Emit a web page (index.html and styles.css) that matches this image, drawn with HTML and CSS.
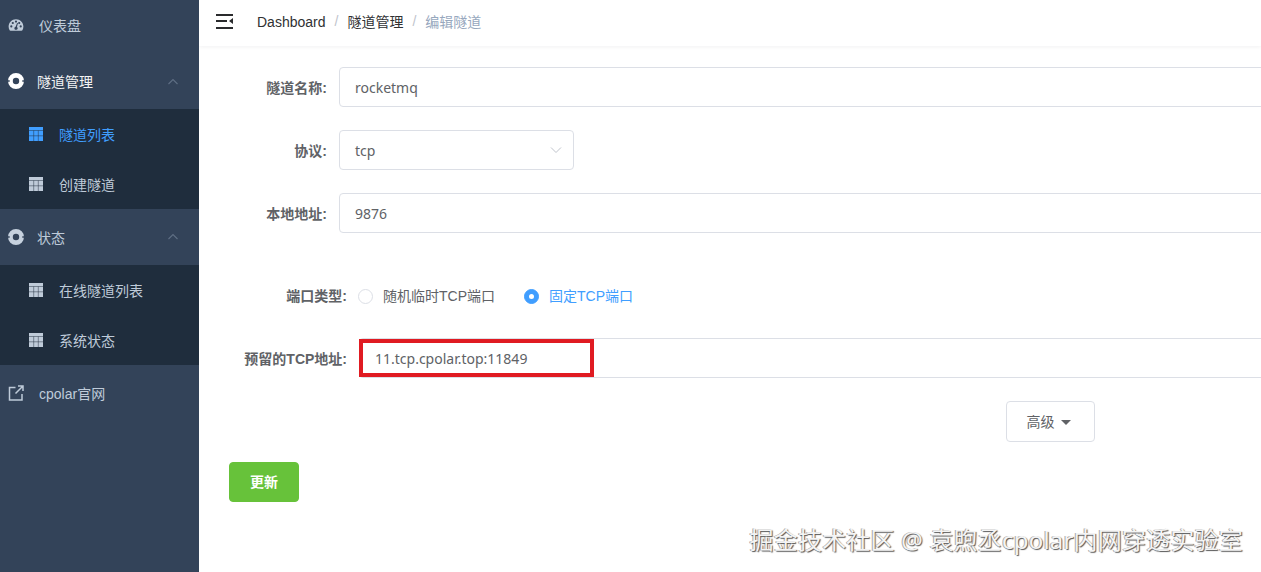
FILE: index.html
```html
<!DOCTYPE html>
<html lang="zh-CN">
<head>
<meta charset="utf-8">
<title>编辑隧道</title>
<link rel="stylesheet" href="styles.css">
</head>
<body>
<div class="app">
  <aside class="sidebar">
    <div class="menu-item first">
      <svg class="icon" viewBox="0 0 16 16"><path class="fill" fill-rule="evenodd" d="M8 2.200C3.800 2.200.6 5.500.6 9.600c0 1.400.4 2.600 1 3.700.2.300.5.500.9.500h11c.4 0 .7-.2.9-.5.6-1.100 1-2.300 1-3.700 0-4.100-3.200-7.400-7.400-7.400zM3.300 10.500a1.100 1.100 0 1 1 0-2.200 1.100 1.100 0 0 1 0 2.200zm1.500-3.400a1.100 1.100 0 1 1 0-2.200 1.100 1.100 0 0 1 0 2.200zM8 5.700A1.100 1.100 0 1 1 8 3.500a1.100 1.100 0 0 1 0 2.200zm1.700 5.700a1.700 1.700 0 0 1-3.300.3 1.700 1.700 0 0 1 1.200-2l1.500-3.700.9.300-1.100 3.800c.5.300.8.800.8 1.300zm1.500-4.300a1.100 1.100 0 1 1 0-2.200 1.100 1.100 0 0 1 0 2.200zm1.500 3.400a1.100 1.100 0 1 1 0-2.200 1.100 1.100 0 0 1 0 2.200z"/></svg>
      <span class="gap-text">仪表盘</span>
    </div>
    <div class="menu-item group open-title">
      <svg class="icon ring" viewBox="0 0 16 16"><path class="ring-body" fill-rule="evenodd" d="M8 0a8 8 0 1 1 0 16A8 8 0 0 1 8 0zm0 4.800a3.200 3.200 0 1 0 0 6.400 3.200 3.200 0 0 0 0-6.400z"/><path class="ring-notch" d="M0 7.200h1.700v1.600H0zM14.300 7.200H16v1.600h-1.700z"/></svg>
      <span class="title-text">隧道管理</span>
      <svg class="chev" viewBox="0 0 12 12"><path d="M1.500 8 6 3.500 10.500 8"/></svg>
    </div>
    <div class="submenu">
      <div class="sub-item active">
        <svg class="icon-table" viewBox="0 0 14 14"><rect class="cell" width="14" height="14"/><path class="grid" d="M0 3.500h14M0 8.800h14M4.700 3.500V14M9.300 3.500V14"/></svg>
        <span>隧道列表</span>
      </div>
      <div class="sub-item">
        <svg class="icon-table" viewBox="0 0 14 14"><rect class="cell" width="14" height="14"/><path class="grid" d="M0 3.500h14M0 8.800h14M4.700 3.500V14M9.300 3.500V14"/></svg>
        <span>创建隧道</span>
      </div>
    </div>
    <div class="menu-item group">
      <svg class="icon ring dim" viewBox="0 0 16 16"><path class="ring-body" fill-rule="evenodd" d="M8 0a8 8 0 1 1 0 16A8 8 0 0 1 8 0zm0 4.800a3.200 3.200 0 1 0 0 6.400 3.200 3.200 0 0 0 0-6.400z"/><path class="ring-notch" d="M0 7.200h1.700v1.600H0zM14.300 7.200H16v1.600h-1.700z"/></svg>
      <span class="title-text">状态</span>
      <svg class="chev" viewBox="0 0 12 12"><path d="M1.500 8 6 3.500 10.500 8"/></svg>
    </div>
    <div class="submenu">
      <div class="sub-item">
        <svg class="icon-table" viewBox="0 0 14 14"><rect class="cell" width="14" height="14"/><path class="grid" d="M0 3.500h14M0 8.800h14M4.700 3.500V14M9.300 3.500V14"/></svg>
        <span>在线隧道列表</span>
      </div>
      <div class="sub-item">
        <svg class="icon-table" viewBox="0 0 14 14"><rect class="cell" width="14" height="14"/><path class="grid" d="M0 3.500h14M0 8.800h14M4.700 3.500V14M9.300 3.500V14"/></svg>
        <span>系统状态</span>
      </div>
    </div>
    <div class="menu-item">
      <svg class="icon link" viewBox="0 0 16 16"><path d="M7.500 2.500H1.500v12.500h12.500V9M10 1h5v5M14.500 1.500 7.500 8.500"/></svg>
      <span class="gap-text">cpolar官网</span>
    </div>
  </aside>
  <main class="main">
    <header class="topbar">
      <svg class="hamburger" viewBox="0 0 17 15"><path d="M0 0h17v2H0zM0 6h11v2H0zM0 13h17v2H0zM17 4v6l-4-3z"/></svg>
      <nav class="crumbs">
        <span class="crumb">Dashboard</span><span class="sep">/</span><span class="crumb">隧道管理</span><span class="sep">/</span><span class="crumb current">编辑隧道</span>
      </nav>
    </header>
    <form class="form">
      <div class="row">
        <label class="label">隧道名称:</label>
        <div class="input">rocketmq</div>
      </div>
      <div class="row">
        <label class="label">协议:</label>
        <div class="input select">tcp<svg class="caret" viewBox="0 0 12 8"><path d="M1 1.500 6 6.500 11 1.500"/></svg></div>
      </div>
      <div class="row">
        <label class="label">本地地址:</label>
        <div class="input">9876</div>
      </div>
      <div class="row radio-row">
        <label class="label wide">端口类型:</label>
        <span class="radio"><i class="dot"></i>随机临时TCP端口</span>
        <span class="radio on"><i class="dot"></i>固定TCP端口</span>
      </div>
      <div class="row reserved">
        <label class="label wide">预留的TCP地址:</label>
        <div class="input flat">11.tcp.cpolar.top:11849<span class="redbox"></span></div>
      </div>
      <div class="adv-row"><button type="button" class="btn adv">高级<i class="tri"></i></button></div>
      <button type="button" class="btn submit">更新</button>
    </form>
    <div class="watermark">掘金技术社区 @ 袁煦丞cpolar内网穿透实验室</div>
  </main>
</div>
</body>
</html>
```
FILE: styles.css
```css
* { box-sizing: border-box; }
html, body { margin: 0; height: 100%; overflow: hidden; background: #fff; }
body { font-family: "Liberation Sans", "Noto Sans CJK SC", sans-serif; font-size: 14px; color: #606266; }
.app { display: flex; width: 1261px; height: 572px; }

.sidebar { width: 199px; flex: none; background: #334359; color: #bfcbd9; overflow: hidden; }
.menu-item { height: 56px; display: flex; align-items: center; padding-left: 8px; position: relative; }
.menu-item.first { margin-top: -2px; padding-bottom: 2px; }
.menu-item.group { height: 55px; }
.open-title { padding-bottom: 2px; }
.menu-item.group + .submenu + .menu-item.group { height: 56px; }
.icon { width: 16px; height: 16px; flex: none; }
.fill { fill: #bfcbd9; }
.ring-body { fill: #fff; }
.ring-notch { fill: #334359; }
.ring.dim .ring-body { fill: #c6d1de; }
.link path { fill: none; stroke: #bfcbd9; stroke-width: 1.500; }
.gap-text { margin-left: 15px; }
.title-text { margin-left: 13px; }
.open-title .title-text { color: #f4f4f5; }
.chev { position: absolute; right: 20px; top: 50%; margin-top: -6px; width: 12px; height: 12px; }
.chev path { fill: none; stroke: #5f6f84; stroke-width: 1.100; }

.submenu { background: #1f2d3d; }
.sub-item { height: 50px; display: flex; align-items: center; padding-left: 29px; }
.icon-table { width: 14px; height: 14px; margin-right: 16px; flex: none; }
.cell { fill: #bfcbd9; }
.grid { fill: none; stroke: #1f2d3d; stroke-width: .8; stroke-opacity: .6; }
.sub-item.active { color: #409eff; }
.sub-item.active .cell { fill: #409eff; }

.main { flex: 1; min-width: 0; overflow: hidden; position: relative; }
.topbar { height: 46px; display: flex; align-items: center; padding: 0 0 3px 17px; box-shadow: 0 1px 4px rgba(0, 21, 41, .06); }
.hamburger { width: 17px; height: 15px; fill: #2a2b2d; flex: none; }
.crumbs { margin-left: 24px; padding-bottom: 2px; display: flex; align-items: center; }
.crumb { color: #303133; }
.crumb:first-child { margin-top: 2px; }
.crumb.current { color: #97a8be; }
.sep { color: #c0c4cc; margin: 0 9px; }

.form { padding: 21px 0 0 30px; }
.row { display: flex; align-items: center; height: 40px; margin-bottom: 23px; }
.label { width: 110px; flex: none; padding-right: 12px; text-align: right; font-weight: 700; color: #606266; }
.label.wide { width: 130px; }
.input { position: relative; width: 1000px; height: 40px; flex: none; display: flex; align-items: center; padding-left: 15px; border: 1px solid #dcdfe6; border-radius: 4px; color: #606266; background: #fff; font-family: "Noto Sans", "Noto Sans CJK SC", sans-serif; }
.select { width: 235px; }
.caret { position: absolute; right: 11px; top: 15px; width: 12px; height: 8px; }
.caret path { fill: none; stroke: #c0c4cc; stroke-width: 1; }

.radio-row { margin-top: 43px; margin-bottom: 22px; padding-bottom: 2px; }
.radio { display: inline-flex; align-items: center; margin-right: 30px; }
.dot { width: 15px; height: 15px; margin: 2px 10px 0 -1px; border: 1px solid #dcdfe6; border-radius: 50%; flex: none; }
.radio.on { color: #409eff; }
.radio.on .dot { background: #409eff; border-color: #409eff; position: relative; }
.radio.on .dot::after { content: ""; position: absolute; left: 4px; top: 4px; width: 5px; height: 5px; border-radius: 50%; background: #fff; }

.reserved { margin-bottom: 23px; }
.redbox { position: absolute; left: -1px; top: 0; width: 235px; height: 38px; border: 4px solid #e01b22; pointer-events: none; }

.btn { font: inherit; display: flex; align-items: center; justify-content: center; border-radius: 4px; cursor: pointer; }
.adv-row { padding-left: 777px; height: 41px; margin-bottom: 20px; }
.adv { width: 89px; height: 41px; background: #fff; border: 1px solid #dcdfe6; color: #606266; padding: 0 4px 2px 0; }
.tri { width: 0; height: 0; margin-left: 6px; margin-top: 4px; border: 5px solid transparent; border-top-color: #606266; border-bottom: 0; }
.submit { width: 70px; height: 40px; background: #67c23a; border: 1px solid #67c23a; color: #fff; font-weight: 700; padding: 0 0 2px; }

.watermark { position: absolute; right: 18px; bottom: 15px; font-family: "Noto Sans", "Noto Sans CJK SC", sans-serif; font-size: 24px; line-height: 34px; letter-spacing: .2px; white-space: nowrap; color: #f4f4f4; text-shadow: 1px 1px 1px #555, -1px 0 0 #aaa; }
```
